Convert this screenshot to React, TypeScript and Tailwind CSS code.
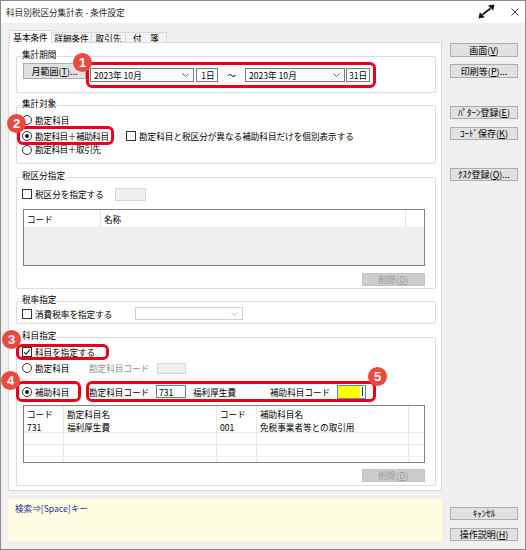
import React from "react";

const ff = "font-['Noto_Sans_CJK_JP',sans-serif]";

function Chevron({ className = "" }: { className?: string }) {
  return (
    <svg width="7" height="4" viewBox="0 0 7 4" className={className}>
      <path d="M0.5 0.5 L3.5 3.5 L6.5 0.5" fill="none" stroke="currentColor" strokeWidth="0.9" />
    </svg>
  );
}

function Radio({ on }: { on?: boolean }) {
  return (
    <span className="flex h-[10px] w-[10px] shrink-0 items-center justify-center rounded-full border border-[#333] bg-white">
      {on && <span className="h-[4px] w-[4px] rounded-full bg-[#1a1a1a]" />}
    </span>
  );
}

function Check({ on }: { on?: boolean }) {
  return (
    <span className="flex h-[10px] w-[10px] shrink-0 items-center justify-center border border-[#333] bg-white">
      {on && (
        <svg width="8" height="8" viewBox="0 0 8 8">
          <path d="M1 4.2 L3 6.2 L7 1.6" fill="none" stroke="#222" strokeWidth="1.1" />
        </svg>
      )}
    </span>
  );
}

function Badge({ n, className }: { n: string; className: string }) {
  return (
    <span
      className={`absolute z-20 flex h-[19px] w-[19px] items-center justify-center rounded-full bg-[#e84a3f] font-['Liberation_Sans',sans-serif] text-[13px] font-bold leading-none text-white ${className}`}
    >
      {n}
    </span>
  );
}

function Btn({
  children,
  className = "",
  disabled,
}: {
  children: React.ReactNode;
  className?: string;
  disabled?: boolean;
}) {
  return (
    <div
      className={`flex shrink-0 items-center justify-center whitespace-nowrap border leading-none ${
        disabled
          ? "border-[#c4c4c4] bg-[#cccccc] text-[#9c9c9c]"
          : "border-[#adadad] bg-[#e1e1e1] text-black"
      } ${className}`}
    >
      {children}
    </div>
  );
}

function U({ children }: { children: React.ReactNode }) {
  return <span className="underline underline-offset-1">{children}</span>;
}

function Combo({ w, text, disabled }: { w: string; text?: string; disabled?: boolean }) {
  return (
    <div
      className={`flex shrink-0 items-center justify-between border bg-white pl-[3px] pr-[4px] ${
        disabled ? "h-[13px] border-[#cfcfcf] text-[#b8b8b8]" : "h-[14px] border-[#7a7a7a] text-[#555]"
      } ${w}`}
    >
      <span className="whitespace-nowrap text-black">{text}</span>
      <Chevron />
    </div>
  );
}

function Group({
  label,
  className,
  boxClass,
  children,
}: {
  label: string;
  className: string;
  boxClass: string;
  children: React.ReactNode;
}) {
  return (
    <div className={className}>
      <div className="relative z-10 ml-[5px] h-[10px] w-fit bg-white px-px leading-[10px]">{label}</div>
      <div className={`-mt-[3px] rounded-[2px] border border-[#dcdcdc] ${boxClass}`}>{children}</div>
    </div>
  );
}

const red = "relative shrink-0 rounded-[6px] border-[3px] border-[#e8001d]";
const side = "w-[68px] text-[9px]";

export default function App() {
  return (
    <div
      className={`flex h-[550px] w-[526px] flex-col border border-[#8a8a8a] bg-[#f0f0f0] text-[8.6px] leading-[10px] text-black ${ff}`}
    >
      {/* title bar */}
      <div className="flex h-[22px] shrink-0 items-center bg-white pl-[5px] pr-[6px]">
        <span className="whitespace-nowrap text-[#2b2b2b]">科目別税区分集計表 - 条件設定</span>
        <svg width="17" height="15" viewBox="0 0 17 15" className="ml-auto -mt-[2px]">
          <path d="M4.5 10.5 L12.5 4.5" stroke="#111" strokeWidth="1.7" />
          <path d="M16.5 0.5 L10 1.6 L15.2 6.6 Z" fill="#111" />
          <path d="M0.5 14.5 L1.8 8.2 L6.8 13.2 Z" fill="#111" />
        </svg>
        <svg width="8" height="8" viewBox="0 0 8 8" className="ml-[16px]">
          <path d="M0.5 0.5 L7.5 7.5 M7.5 0.5 L0.5 7.5" stroke="#333" strokeWidth="0.9" />
        </svg>
      </div>

      <div className="flex flex-1">
        {/* left column: tabs, panel, hint */}
        <div className="ml-[7px] mt-[7px] flex w-[434px] shrink-0 flex-col">
          <div className="flex h-[12px] items-end pl-[1px]">
            <div className="relative z-10 -mb-px flex h-[13px] w-[43px] items-center justify-center border border-b-0 border-[#d9d9d9] bg-white">
              基本条件
            </div>
            <div className="flex h-[10px] w-[40px] items-center justify-center border-r border-t border-[#d9d9d9] bg-[#f3f3f3]">
              詳細条件
            </div>
            <div className="flex h-[10px] w-[34px] items-center justify-center border-r border-t border-[#d9d9d9] bg-[#f3f3f3]">
              取引先
            </div>
            <div className="flex h-[10px] w-[41px] items-center justify-center border-r border-t border-[#d9d9d9] bg-[#f3f3f3]">
              付　箋
            </div>
          </div>

          <div className="h-[449px] border border-[#d9d9d9] bg-white pl-[7px] pr-[5px]">
            {/* 集計期間 */}
            <Group label="集計期間" className="mt-[6px]" boxClass="flex h-[37px] items-start pl-[6px] pt-[5px]">
              <Btn className="mt-[1px] h-[16px] w-[63px] text-[9px]">
                月範囲(<U>T</U>)...
              </Btn>
              <div className={`${red} flex h-[26px] w-[290px] items-center pl-[1px]`}>
                <Badge n="1" className="left-[-16px] top-[-12px]" />
                <Combo w="w-[104px]" text="2023年 10月" />
                <div className="ml-[2px] flex h-[14px] w-[22px] items-center justify-center border border-[#7a7a7a] bg-white pl-[2px]">
                  1日
                </div>
                <span className="w-[27px] text-center">～</span>
                <Combo w="w-[100px]" text="2023年 10月" />
                <div className="ml-[1px] flex h-[14px] w-[24px] items-center justify-center border border-[#7a7a7a] bg-white">
                  31日
                </div>
              </div>
            </Group>

            {/* 集計対象 */}
            <Group label="集計対象" className="mt-[5px]" boxClass="flex h-[59px] flex-col pt-[7px]">
              <div className="flex h-[13px] items-center gap-[3px] pl-[5px]">
                <Radio />
                <span>勘定科目</span>
              </div>
              <div className="flex h-[19px] items-center">
                <div className={`${red} flex h-[19px] w-[97px] items-center gap-[3px] pl-[2px]`}>
                  <Badge n="2" className="left-[-13px] top-[-15px]" />
                  <Radio on />
                  <span className="whitespace-nowrap tracking-[-0.4px]">勘定科目＋補助科目</span>
                </div>
                <div className="ml-[12px] flex items-center gap-[3px]">
                  <Check />
                  <span className="whitespace-nowrap">勘定科目と税区分が異なる補助科目だけを個別表示する</span>
                </div>
              </div>
              <div className="flex h-[9px] items-center gap-[3px] pl-[5px] leading-[9px]">
                <Radio />
                <span className="tracking-[-0.4px]">勘定科目＋取引先</span>
              </div>
            </Group>

            {/* 税区分指定 */}
            <Group label="税区分指定" className="mt-[6px]" boxClass="flex h-[112px] flex-col pt-[9px]">
              <div className="flex h-[14px] items-center pl-[5px]">
                <div className="flex w-[93px] items-center gap-[3px]">
                  <Check />
                  <span className="whitespace-nowrap">税区分を指定する</span>
                </div>
                <div className="h-[13px] w-[31px] border border-[#d5d5d5] bg-[#f0f0f0]" />
              </div>
              <div className="ml-[6px] mt-[8px] flex h-[57px] w-[402px] flex-col border border-[#828282] bg-[#f0f0f0]">
                <div className="flex h-[17px] shrink-0 bg-white">
                  <div className="flex w-[77px] items-center border-r border-[#e3e3e3] pl-[3px]">コード</div>
                  <div className="flex w-[305px] items-center border-r border-[#e3e3e3] pl-[3px]">名称</div>
                </div>
              </div>
              <Btn disabled className="mr-[10px] mt-[7px] h-[13px] w-[63px] self-end text-[9px]">
                削除(<U>D</U>)
              </Btn>
            </Group>

            {/* 税率指定 */}
            <Group label="税率指定" className="mt-[5px]" boxClass="flex h-[23px] items-center pl-[5px] pt-[2px]">
              <div className="flex w-[113px] items-center gap-[3px]">
                <Check />
                <span className="whitespace-nowrap">消費税率を指定する</span>
              </div>
              <Combo w="w-[108px]" disabled />
            </Group>

            {/* 科目指定 */}
            <Group label="科目指定" className="mt-[6px]" boxClass="flex h-[149px] flex-col pt-[6px]">
              <div className={`${red} -ml-px flex h-[16px] w-[93px] items-center gap-[3px] pl-[3px]`}>
                <Badge n="3" className="left-[-17px] top-[-17px]" />
                <Check on />
                <span className="whitespace-nowrap">科目を指定する</span>
              </div>
              <div className="flex h-[16px] items-center pl-[5px]">
                <div className="flex w-[67px] items-center gap-[3px]">
                  <Radio />
                  <span>勘定科目</span>
                </div>
                <span className="w-[68px] whitespace-nowrap text-[#8f8f8f]">勘定科目コード</span>
                <div className="h-[11px] w-[29px] border border-[#d5d5d5] bg-[#f0f0f0]" />
              </div>
              <div className="mt-[5px] flex h-[21px]">
                <div className={`${red} -ml-px flex h-[21px] w-[65px] items-center gap-[3px] pl-[3px]`}>
                  <Badge n="4" className="left-[-18px] top-[-13px]" />
                  <Radio on />
                  <span>補助科目</span>
                </div>
                <div className={`${red} ml-[5px] flex h-[21px] w-[290px] items-center`}>
                  <Badge n="5" className="right-[-14px] top-[-17px]" />
                  <span className="w-[67px] whitespace-nowrap">勘定科目コード</span>
                  <div className="flex h-[13px] w-[30px] items-center border border-[#7a7a7a] bg-white pl-[2px]">731</div>
                  <span className="ml-[7px] w-[77px] whitespace-nowrap">福利厚生費</span>
                  <span className="w-[67px] whitespace-nowrap">補助科目コード</span>
                  <div className="flex h-[14px] w-[29px] border border-[#4a8fd8] bg-white">
                    <div className="flex-1 bg-[#ffff00]" />
                    <div className="flex w-[5px] items-center justify-center">
                      <div className="h-[9px] w-px bg-[#333]" />
                    </div>
                  </div>
                </div>
              </div>
              <div className="ml-[6px] mt-[3px] flex h-[58px] w-[402px] flex-col overflow-hidden border border-[#828282] bg-white">
                {[
                  { h: "h-[15px]", b: "", c: ["コード", "勘定科目名", "コード", "補助科目名"] },
                  { h: "h-[12px]", b: "border-b border-[#ececec]", c: ["731", "福利厚生費", "001", "免税事業者等との取引用"] },
                  { h: "h-[12px]", b: "border-b border-[#ececec]", c: ["", "", "", ""] },
                  { h: "h-[12px]", b: "border-b border-[#ececec]", c: ["", "", "", ""] },
                  { h: "h-[12px]", b: "", c: ["", "", "", ""] },
                ].map((r, i) => (
                  <div key={i} className={`flex shrink-0 ${r.h} ${r.b}`}>
                    <div className="flex w-[40px] items-center border-r border-[#e6e6e6] pl-[3px]">{r.c[0]}</div>
                    <div className="flex w-[153px] items-center border-r border-[#e6e6e6] pl-[3px]">{r.c[1]}</div>
                    <div className="flex w-[40px] items-center border-r border-[#e6e6e6] pl-[3px]">{r.c[2]}</div>
                    <div className="flex w-[152px] items-center whitespace-nowrap border-r border-[#e6e6e6] pl-[3px]">
                      {r.c[3]}
                    </div>
                  </div>
                ))}
              </div>
              <Btn disabled className="mr-[10px] mt-[6px] h-[13px] w-[63px] self-end text-[9px]">
                削除(<U>D</U>)
              </Btn>
            </Group>
          </div>

          <div className="mt-[8px] h-[42px] bg-[#fffde1] pl-[7px] pt-[4px] text-[#23339a]">検索⇒[Space]キー</div>
        </div>

        {/* right column: command buttons */}
        <div className="flex flex-1 flex-col pb-[8px] pl-[8px] pt-[20px]">
          <Btn className={`h-[14px] ${side}`}>
            画面(<U>V</U>)
          </Btn>
          <Btn className={`mt-[7px] h-[14px] ${side}`}>
            印刷等(<U>P</U>)...
          </Btn>
          <Btn className={`mt-[28px] h-[13px] ${side}`}>
            ﾊﾟﾀｰﾝ登録(<U>E</U>)
          </Btn>
          <Btn className={`mt-[8px] h-[13px] ${side}`}>
            ｺｰﾄﾞ保存(<U>K</U>)
          </Btn>
          <Btn className={`mt-[28px] h-[13px] ${side}`}>
            ｸｽｸ登録(<U>Q</U>)...
          </Btn>
          <div className="flex-1" />
          <Btn className={`h-[13px] ${side}`}>ｷｬﾝｾﾙ</Btn>
          <Btn className={`mt-[8px] h-[13px] ${side}`}>
            操作説明(<U>H</U>)
          </Btn>
        </div>
      </div>
    </div>
  );
}
